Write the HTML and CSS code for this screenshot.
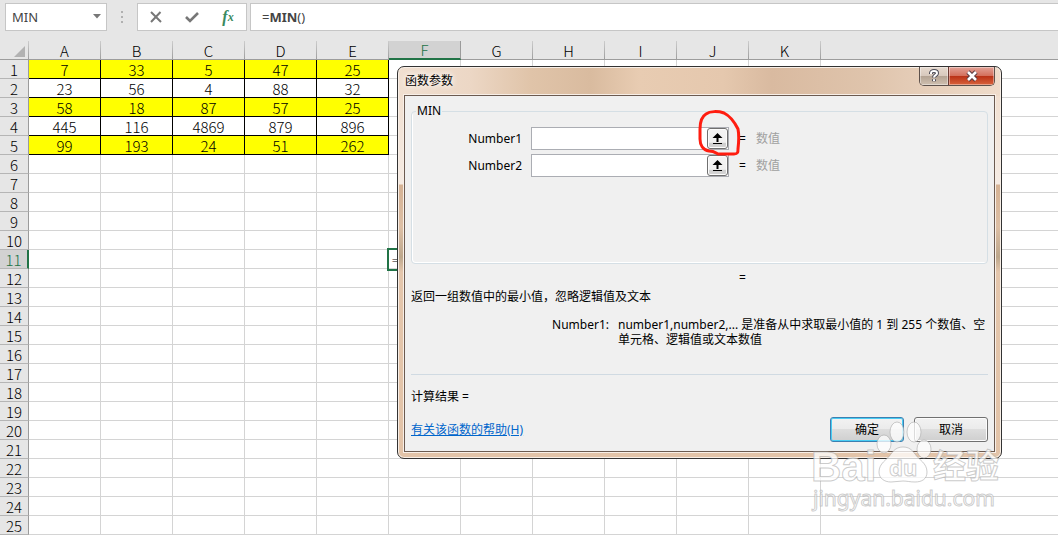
FILE: index.html
```html
<!DOCTYPE html>
<html lang="zh-CN">
<head>
    <meta charset="UTF-8">
    <meta name="viewport" content="width=device-width, initial-scale=1.0">
    <title>函数参数</title>
    <link rel="stylesheet" href="styles.css">
</head>
<body>
    <div class="formula-bar">
        <div class="name-box">
            <select class="name-select" aria-label="名称框">
                <option>MIN</option>
            </select>
            <svg class="name-arrow" width="8" height="5" viewBox="0 0 8 5"><path d="M0 0h8L4 4.5z" fill="#777"/></svg>
        </div>
        <svg class="grip" width="2" height="12" viewBox="0 0 2 12"><path d="M0 0h2v2H0zM0 5h2v2H0zM0 10h2v2H0z" fill="#b0b0b0"/></svg>
        <div class="formula-tools">
            <button type="button" class="tool" aria-label="取消">
                <svg width="12" height="12" viewBox="0 0 12 12"><path d="M1 1l10 10M10.5 1L1 11" fill="none" stroke="#777" stroke-width="2"/></svg>
            </button>
            <button type="button" class="tool" aria-label="输入">
                <svg width="14" height="12" viewBox="0 0 14 12"><path d="M1 6l4 4 8-8" fill="none" stroke="#777" stroke-width="2.6"/></svg>
            </button>
            <button type="button" class="tool tool-fx" aria-label="插入函数"><i>f</i><sub>x</sub></button>
        </div>
        <div class="formula-input" contenteditable="true" role="textbox" aria-label="编辑栏" spellcheck="false">=<b>MIN</b>()</div>
    </div>

    <table class="sheet" id="sheet">
        <thead>
            <tr>
                <th class="corner"><svg width="11" height="11" viewBox="0 0 11 11"><path d="M11 0v11H0z" fill="#b2b2b2"/></svg></th>
                <th>A</th>
                <th>B</th>
                <th>C</th>
                <th>D</th>
                <th>E</th>
                <th class="current">F</th>
                <th>G</th>
                <th>H</th>
                <th>I</th>
                <th>J</th>
                <th>K</th>
                <th class="rest"></th>
            </tr>
        </thead>
        <tbody></tbody>
    </table>

    <div class="dialog" role="dialog" aria-labelledby="dialogTitle">
        <div class="titlebar">
            <span class="title" id="dialogTitle">函数参数</span>
            <div class="window-buttons">
                <button type="button" class="win-help" aria-label="帮助">
                    <svg width="12" height="14" viewBox="0 0 12 14">
                        <path d="M3 5V4.2C3 2.7 4.2 2 6 2s3 .8 3 2.2C9 6.2 6 6 6 8.5M6 10.3v2" fill="none" stroke="#4c4c58" stroke-width="4"/>
                        <path d="M3 5V4.2C3 2.7 4.2 2 6 2s3 .8 3 2.2C9 6.2 6 6 6 8.5M6 10.3v1.7" fill="none" stroke="#fff" stroke-width="2"/>
                    </svg>
                </button>
                <button type="button" class="win-close" aria-label="关闭">
                    <svg width="12" height="12" viewBox="0 0 12 12">
                        <path d="M2 2l8 8M10 2l-8 8" fill="none" stroke="#5a3a40" stroke-width="4.6"/>
                        <path d="M2 2l8 8M10 2l-8 8" fill="none" stroke="#fff" stroke-width="2.6"/>
                    </svg>
                </button>
            </div>
        </div>
        <form class="dialog-body">
            <fieldset class="arguments">
                <legend>MIN</legend>
                <div class="argument">
                    <label for="number1">Number1</label>
                    <div class="range-box">
                        <input type="text" id="number1">
                        <button type="button" class="collapse" aria-label="折叠">
                            <svg width="11" height="12" viewBox="0 0 11 12"><path d="M5.5 0l5 5h-4v4h-2V5h-4zM1 10h9v1H1z"/></svg>
                        </button>
                    </div>
                    <span class="equals">=</span>
                    <span class="hint">数值</span>
                </div>
                <div class="argument">
                    <label for="number2">Number2</label>
                    <div class="range-box">
                        <input type="text" id="number2">
                        <button type="button" class="collapse" aria-label="折叠">
                            <svg width="11" height="12" viewBox="0 0 11 12"><path d="M5.5 0l5 5h-4v4h-2V5h-4zM1 10h9v1H1z"/></svg>
                        </button>
                    </div>
                    <span class="equals">=</span>
                    <span class="hint">数值</span>
                </div>
            </fieldset>
            <div class="preview">=</div>
            <p class="summary">返回一组数值中的最小值，忽略逻辑值及文本</p>
            <div class="detail">
                <span class="detail-name">Number1:</span>
                <p class="detail-text">number1,number2,... 是准备从中求取最小值的 1 到 255 个数值、空单元格、逻辑值或文本数值</p>
            </div>
            <hr class="divider">
            <p class="result">计算结果 =</p>
            <div class="dialog-footer">
                <a class="help-link" href="#help">有关该函数的帮助(H)</a>
                <button type="submit" class="btn btn-default">确定</button>
                <button type="button" class="btn">取消</button>
            </div>
        </form>
        <svg class="marker" width="46" height="50" viewBox="0 0 46 50">
            <path d="M27 5C21 3 13 3 9 6 4 9 3 14 3 21v10c0 6 3 11 9 12 5 0 7 2 9 3h16c4 0 4-2 4-5 1-9 1-15 0-20-3-6-8-13-14-16z" fill="none" stroke="#ff1d10" stroke-width="3" stroke-linejoin="round"/>
        </svg>
    </div>

    <svg class="watermark" width="200" height="100" viewBox="0 0 200 100">
        <g class="watermark-shape">
            <text x="1" y="61" class="mark-big">Bai</text>
            <ellipse cx="74" cy="24" rx="7" ry="9"/>
            <ellipse cx="87" cy="12" rx="7" ry="10"/>
            <ellipse cx="104" cy="12" rx="7" ry="10"/>
            <ellipse cx="114" cy="29" rx="7" ry="9"/>
            <path d="M93 27c6 0 9 3 12 7 4 6 12 9 12 18 0 7-5 10-12 10-5 0-8-1-12-1s-8 1-12 1c-7 0-12-4-12-10 0-9 8-12 12-18 3-4 6-7 12-7z"/>
            <text x="79" y="56" class="mark-du">du</text>
            <text x="123" y="58" class="mark-cjk">经验</text>
            <text x="3" y="86" class="mark-url">jingyan.baidu.com</text>
        </g>
    </svg>

    <script>
        const columns = 11;
        const values = [
            [7, 33, 5, 47, 25],
            [23, 56, 4, 88, 32],
            [58, 18, 87, 57, 25],
            [445, 116, 4869, 879, 896],
            [99, 193, 24, 51, 262]
        ];

        const body = document.querySelector('#sheet tbody');
        for (let r = 1; r <= 25; r++) {
            const row = document.createElement('tr');
            const data = values[r - 1] || [];
            let html = `<th class="${r === 11 ? 'current' : ''}">${r}</th>`;
            for (let c = 0; c < columns; c++) {
                if (c < data.length) {
                    html += `<td class="filled ${r % 2 ? 'yellow' : ''}">${data[c]}</td>`;
                } else if (r === 11 && c === 5) {
                    html += '<td class="editing">=</td>';
                } else {
                    html += '<td></td>';
                }
            }
            row.innerHTML = html + '<td class="rest"></td>';
            body.appendChild(row);
        }
    </script>
</body>
</html>
```

FILE: styles.css
```css
* {
    box-sizing: border-box;
}

body {
    margin: 0;
    position: relative;
    min-height: 100vh;
    background: #fff;
    color: #000;
    font-family: "Noto Sans", "Noto Sans CJK SC", sans-serif;
    font-size: 12px;
}

button, input, select {
    font: inherit;
    color: inherit;
}

p {
    margin: 0;
}

/* formula bar */
.formula-bar {
    display: flex;
    align-items: center;
    height: 41px;
    padding: 3px 0 10px 5px;
    background: #e6e6e6;
    color: #444;
    font-size: 13px;
}

.name-box {
    position: relative;
    width: 102px;
    height: 28px;
}

.name-select {
    width: 100%;
    height: 100%;
    padding: 0 6px;
    border: 1px solid #c6c6c6;
    border-radius: 0;
    background: #fff;
    appearance: none;
}

.name-arrow {
    position: absolute;
    right: 6px;
    top: 11px;
    pointer-events: none;
}

.grip {
    margin: 0 14px;
}

.formula-tools {
    display: flex;
    align-items: center;
    justify-content: space-between;
    width: 110px;
    height: 28px;
    padding: 0 10px;
    margin-right: 3px;
    border: 1px solid #c6c6c6;
    background: #fff;
}

.tool {
    display: flex;
    align-items: center;
    justify-content: center;
    width: 16px;
    height: 24px;
    padding: 0;
    border: 0;
    background: none;
}

.tool-fx {
    color: #3a8a5f;
    font-family: "Liberation Serif", serif;
    font-size: 16px;
    font-weight: bold;
}

.tool-fx sub {
    font-size: 12px;
    font-style: italic;
}

.formula-input {
    flex: 1;
    height: 28px;
    padding: 0 11px;
    border: 1px solid #c6c6c6;
    border-right: 0;
    background: #fff;
    line-height: 26px;
}

/* sheet */
.sheet {
    width: 100%;
    table-layout: fixed;
    border-spacing: 0;
    font-family: "Noto Sans CJK SC", sans-serif;
    font-size: 15px;
    line-height: 17px;
    text-align: center;
}

.sheet th,
.sheet td {
    width: 72px;
    height: 19px;
    padding: 0;
    border-right: 1px solid #d4d4d4;
    border-bottom: 1px solid #d4d4d4;
    font-weight: 300;
}

.sheet thead th {
    border-right: 1px solid;
    border-image: linear-gradient(#cfcfcf, #9b9b9b) 1;
    border-bottom: 1px solid #9b9b9b;
    background: #e6e6e6;
}

.sheet tbody th,
.sheet .corner {
    width: 29px;
    border-right: 1px solid #9b9b9b;
    border-bottom: 1px solid #b5b5b5;
    background: #e6e6e6;
}

.sheet .corner svg {
    display: block;
    margin: 2px 3px 0 auto;
}

.sheet .rest {
    width: auto;
    border-right: 0;
}

.sheet thead .current {
    border-image: none;
    border-right: 1px solid #9b9b9b;
    border-bottom: 2px solid #217346;
    background: #d2d2d2;
    color: #217346;
}

.sheet tbody .current {
    border-right: 2px solid #217346;
    background: #d2d2d2;
    color: #217346;
}

.sheet .filled {
    border-color: #000;
}

.sheet .yellow {
    background: #ff0;
}

.sheet .editing {
    padding-left: 3px;
    outline: 2px solid #217346;
    text-align: left;
    font-size: 12px;
}

/* dialog */
.dialog {
    position: absolute;
    left: 397px;
    top: 66px;
    width: 605px;
    padding: 0 6px 6px;
    border: 1px solid #333;
    border-radius: 7px;
    background:
        linear-gradient(90deg, #f0dfd0 0, #ecd7c5 12%, #e0c4a9 22%, #d9bb9f 32%, #e8ccb2 40%, #e5c8ae 54%, #d9baa0 62%, #dfc4ac 78%, #efdccb 100%) 0 0 / 100% 29px no-repeat,
        linear-gradient(#f0dccb 0, #f5ebe3 117px, #d5b294 118px, #ddbfa5 160px, #bda78c 190px, #e4c6ac 205px, #e2c3a8 100%);
    box-shadow: inset 0 0 0 1px #f8efe7;
}

.titlebar {
    display: flex;
    justify-content: space-between;
    align-items: flex-start;
    height: 28px;
}

.title {
    padding-left: 1px;
    line-height: 28px;
    text-shadow: 0 0 6px #fff, 0 0 6px #fff;
}

.window-buttons {
    display: flex;
    width: 76px;
    height: 19px;
    border: 1px solid #5d514b;
    border-top: 0;
    border-radius: 0 0 5px 5px;
    overflow: hidden;
}

.window-buttons button {
    display: flex;
    align-items: center;
    justify-content: center;
    padding: 0;
    border: 0;
    box-shadow: inset 0 0 0 1px rgba(255, 255, 255, 0.4);
}

.win-help {
    width: 28px;
    background: linear-gradient(#e6d9ce 0, #d8c9bd 48%, #b3a292 50%, #cfc0b0 100%);
}

.window-buttons .win-close {
    flex: 1;
    border-left: 1px solid #6b3a33;
    background: linear-gradient(#e3a297 0, #d4705c 48%, #b93015 50%, #d8633c 100%);
}

.dialog-body {
    padding: 7px 6px 9px;
    border: 1px solid #6b5a50;
    background: #f0f0f0;
    box-shadow: 0 0 0 1px #f8efe7;
    line-height: 16px;
}

.arguments {
    min-width: 0;
    margin: 0;
    padding: 8px 0 86px;
    border: 1px solid #d5dfe5;
    border-radius: 4px;
    box-shadow: inset 1px -1px 0 #fff;
}

.arguments legend {
    margin-left: 4px;
    padding: 0 1px;
}

.argument {
    display: flex;
    align-items: center;
    margin-bottom: 4px;
}

.argument:last-child {
    margin-bottom: 0;
}

.argument label {
    width: 119px;
    padding-right: 9px;
    text-align: right;
}

.range-box {
    display: flex;
    width: 198px;
    height: 23px;
    border: 1px solid #abadb3;
    background: #fff;
}

.range-box input {
    flex: 1;
    min-width: 0;
    padding: 0 4px;
    border: 0;
    outline: 0;
    background: none;
}

.collapse {
    display: flex;
    align-items: center;
    justify-content: center;
    width: 21px;
    padding: 0;
    border: 1px solid #707070;
    border-radius: 3px;
    background: linear-gradient(#f4f4f4 0, #f0f0f0 70%, #cfcfcf 75%, #d5d5d5 100%);
    box-shadow: inset 0 0 0 1px #fcfcfc;
}

.equals {
    margin: 0 10px;
}

.hint {
    color: #a0a0a0;
}

.preview {
    margin-top: 6px;
    padding-left: 328px;
}

.summary {
    margin-top: 3px;
}

.detail {
    display: flex;
    margin-top: 12px;
    line-height: 15px;
}

.detail-name {
    width: 207px;
    padding-right: 9px;
    text-align: right;
}

.detail-text {
    flex: 1;
}

.divider {
    margin: 27px 0 14px;
    border: 0;
    border-top: 1px solid #d0dae2;
}

.dialog-footer {
    display: flex;
    align-items: center;
    gap: 10px;
    margin-top: 12px;
}

.help-link {
    margin-right: auto;
    color: #0066cc;
}

.btn {
    width: 74px;
    height: 25px;
    padding: 0;
    border: 1px solid #707070;
    border-radius: 3px;
    background: linear-gradient(#f2f2f2 0, #ebebeb 49%, #dddddd 50%, #cfcfcf 100%);
    box-shadow: inset 0 0 0 1px #fcfcfc;
}

.btn-default {
    border-color: #3c7fb1;
    box-shadow: inset 0 0 0 1px #48cdf4;
}

/* red pen mark around the collapse button */
.marker {
    position: absolute;
    left: 299px;
    top: 41px;
    pointer-events: none;
}

/* watermark */
.watermark {
    position: absolute;
    left: 810px;
    top: 420px;
    overflow: visible;
    pointer-events: none;
}

.watermark-shape {
    fill: rgba(255, 255, 255, 0.75);
    stroke: rgba(170, 170, 170, 0.6);
    stroke-width: 1px;
    font-family: "Noto Sans", "Noto Sans CJK SC", sans-serif;
}

.mark-big {
    font-family: "Liberation Sans", sans-serif;
    font-size: 42px;
    font-weight: bold;
}

.mark-du {
    font-size: 22px;
    font-weight: bold;
}

.mark-cjk {
    font-family: "Noto Sans CJK SC", sans-serif;
    font-size: 33px;
    font-weight: bold;
}

.mark-url {
    font-size: 21px;
}
```
